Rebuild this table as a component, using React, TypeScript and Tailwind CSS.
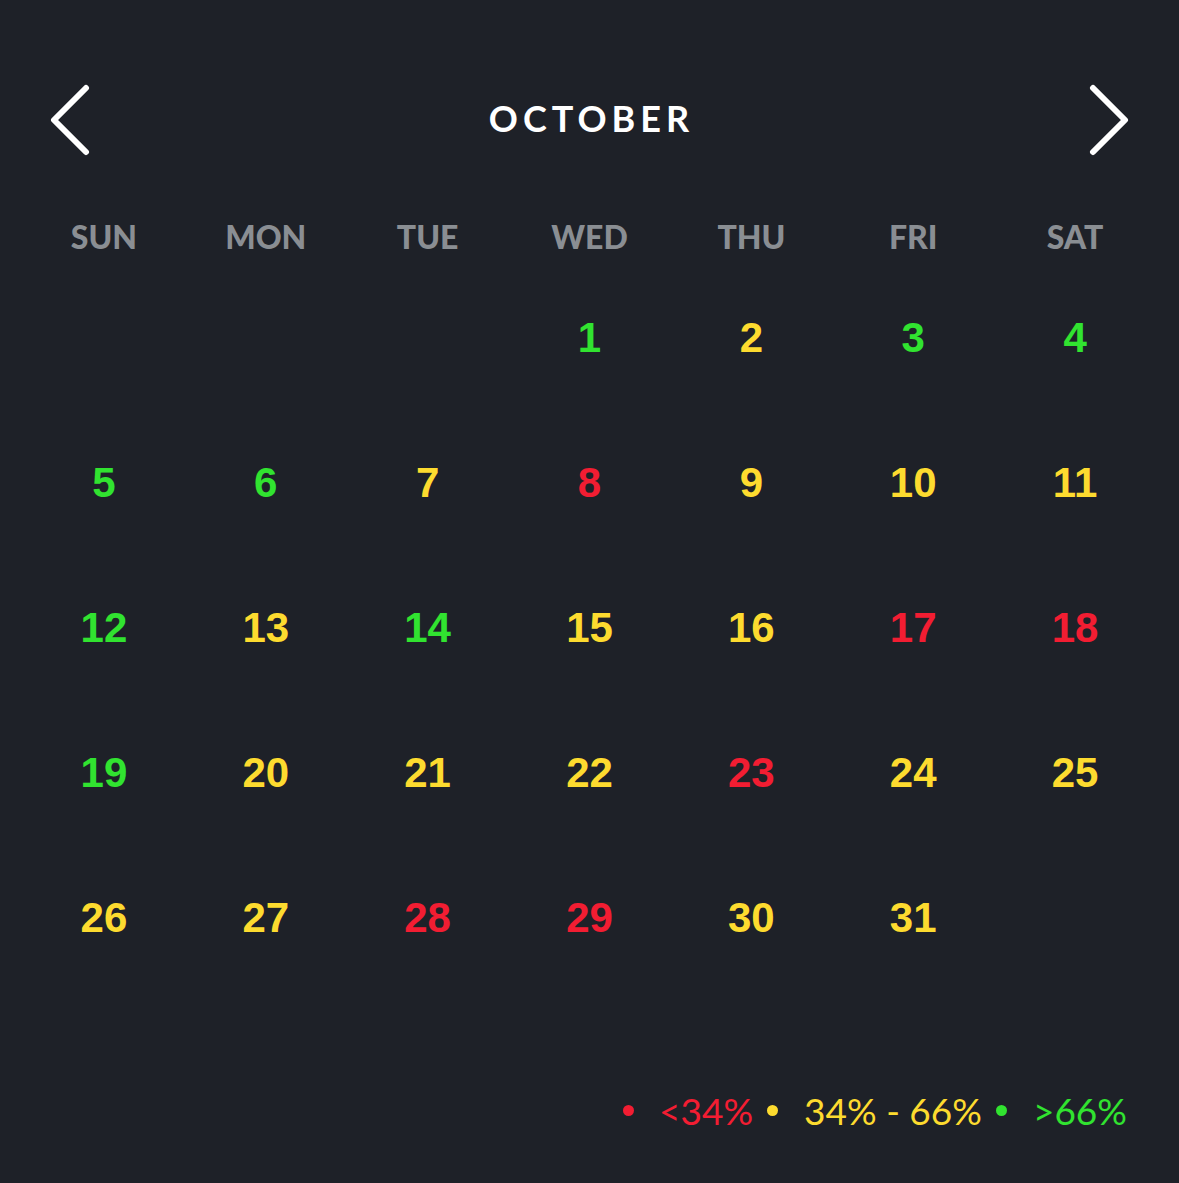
import React from "react";

type Level = "low" | "mid" | "high";

const COLORS: Record<Level, string> = {
  low: "text-[#f21d32]",
  mid: "text-[#fddb2f]",
  high: "text-[#31e330]",
};

// October: starts on Wednesday (3 blank cells)
const days: Level[] = [
  "high", "mid", "high", "high",
  "high", "high", "mid", "low", "mid", "mid", "mid",
  "high", "mid", "high", "mid", "mid", "low", "low",
  "high", "mid", "mid", "mid", "low", "mid", "mid",
  "mid", "mid", "low", "low", "mid", "mid",
];

const names = ["SUN", "MON", "TUE", "WED", "THU", "FRI", "SAT"];

function Chevron({ dir }: { dir: "left" | "right" }) {
  return (
    <svg width="44" height="72" viewBox="0 0 44 72" fill="none">
      <polyline
        points={dir === "left" ? "38,4 6,36 38,68" : "6,4 38,36 6,68"}
        stroke="white"
        strokeWidth="6"
        strokeLinecap="round"
        strokeLinejoin="round"
      />
    </svg>
  );
}

export default function App() {
  const cells: (Level | null)[] = [null, null, null, ...days];
  while (cells.length < 35) cells.push(null);

  return (
    <div className="h-[1183px] w-full bg-[#1e2128] font-['Lato',sans-serif]">
      <div className="flex h-[153px] items-end justify-between px-[48px]">
        <div className="-mb-[3px]"><Chevron dir="left" /></div>
        <h1 className="mb-[17px] ml-[4px] text-[36px] font-bold leading-none tracking-[5px] text-white">OCTOBER</h1>
        <div className="-mb-[3px]"><Chevron dir="right" /></div>
      </div>

      <div className="mt-[60px] grid h-[40px] grid-cols-7 px-[23px]">
        {names.map((n) => (
          <div key={n} className="flex items-center justify-center text-[32px] font-black text-[#8a8e93]">
            {n}
          </div>
        ))}
      </div>

      <div className="mt-[12px] grid grid-cols-7 px-[23px] font-['Liberation_Sans',sans-serif]">
        {cells.map((c, i) => (
          <div key={i} className="flex h-[145px] items-center justify-center">
            {c && (
              <span className={`text-[42px] font-bold leading-none ${COLORS[c]}`}>
                {i - 2}
              </span>
            )}
          </div>
        ))}
      </div>

      <div className="mt-[100px] flex h-[40px] items-center justify-end pr-[52px] text-[37px] leading-none">
        <span className="mr-[25px] h-[11px] w-[11px] rounded-full bg-[#f21d32]" />
        <span className="text-[#f21d32]">&lt;34%</span>
        <span className="ml-[14px] mr-[26px] h-[11px] w-[11px] rounded-full bg-[#fddb2f]" />
        <span className="text-[#fddb2f]">34% - 66%</span>
        <span className="ml-[14px] mr-[26px] h-[11px] w-[11px] rounded-full bg-[#31e330]" />
        <span className="text-[#31e330]">&gt;66%</span>
      </div>
    </div>
  );
}
